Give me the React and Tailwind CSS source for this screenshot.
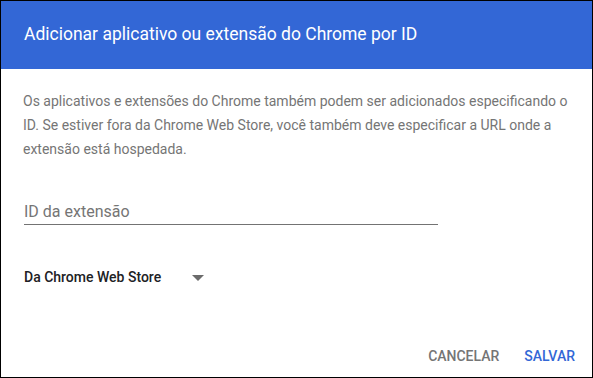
import React from "react";

const App = () => {
  return (
    <div className="w-[593px] h-[378px] border border-black bg-white flex flex-col font-['Roboto',sans-serif]">
      <div className="h-[68px] bg-[#3367d6] flex items-center px-[23px] shrink-0">
        <h1 className="text-[17.5px] text-white leading-none">Adicionar aplicativo ou extensão do Chrome por ID</h1>
      </div>
      <div className="flex-1 flex flex-col pl-[22px] pr-[17px] pt-[20px]">
        <p className="pr-[5px] text-[14px] leading-[24px] text-[#757575]">
          Os aplicativos e extensões do Chrome também podem ser adicionados especificando o ID. Se estiver fora da Chrome Web Store, você também deve especificar a URL onde a extensão está hospedada.
        </p>
        <div className="mt-[39px] ml-[1px] w-[414px] border-b border-[#737373]">
          <span className="text-[16px] text-[#757575]">ID da extensão</span>
        </div>
        <div className="mt-[42px] ml-[1px] flex items-center">
          <span className="text-[14px] font-medium text-[#202124]">Da Chrome Web Store</span>
          <span className="ml-[31px] w-0 h-0 border-l-[6px] border-r-[6px] border-t-[6px] border-l-transparent border-r-transparent border-t-[#6b6b6b]"></span>
        </div>
        <div className="mt-auto mb-[10px] flex justify-end gap-[25px] text-[14px] font-medium">
          <button className="text-[#757575]">CANCELAR</button>
          <button className="text-[#3367d6]">SALVAR</button>
        </div>
      </div>
    </div>
  );
};

export default App;
